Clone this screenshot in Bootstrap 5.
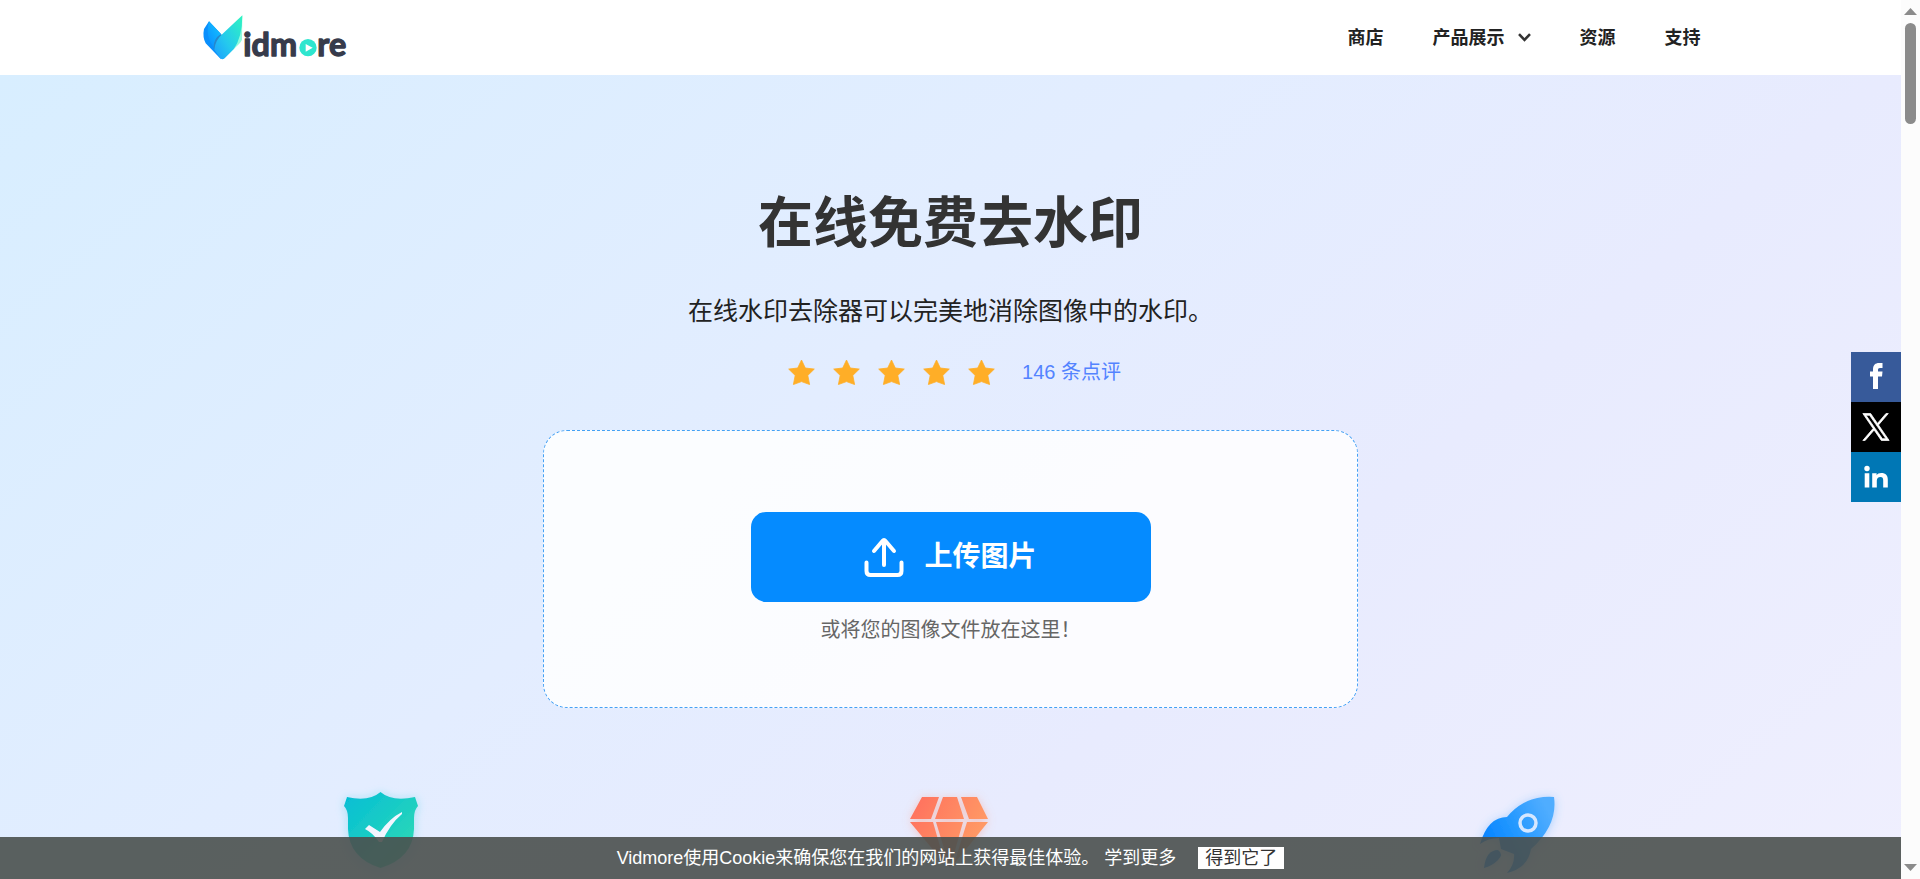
<!DOCTYPE html>
<html lang="zh-CN">
<head>
<meta charset="utf-8">
<meta name="viewport" content="width=device-width, initial-scale=1">
<title>在线免费去水印</title>
<link href="https://cdn.jsdelivr.net/npm/bootstrap@5.3.0/dist/css/bootstrap.min.css" rel="stylesheet">
<style>
body { font-family: "Liberation Sans", "Noto Sans CJK SC", sans-serif; color: #222; }
a { text-decoration: none; }
.wrap { width: 100%; max-width: 1500px; }
.site-header { height: 75px; }
.site-nav { gap: 49px; font-size: 18px; font-weight: 700; line-height: 26px; }
.site-nav a { color: #222; }
.with-menu { gap: 13px; }
.hero { padding-top: 108px; background: linear-gradient(140deg, #d8eeff 0%, #e3edff 42%, #e8ebfe 66%, #efeffe 100%); }
.hero h1 { font-size: 55px; line-height: 80px; font-weight: 700; color: #333; margin-bottom: 28px; }
.intro { font-size: 25px; line-height: 40px; margin-bottom: 26px; }
.rating { font-size: 20px; line-height: 30px; gap: 27px; margin-bottom: 43px; }
.stars { gap: 18px; }
.rating a { color: #5383ff; }
.drop-zone { width: 100%; max-width: 815px; height: 278px; padding-top: 81px; border: 1px dashed #44a1f5; border-radius: 24px; background: rgba(255, 255, 255, .85); }
.upload { width: 400px; max-width: 100%; height: 90px; border-radius: 15px; background: #058bff; color: #fff; font-size: 28px; font-weight: 700; gap: 20px; }
.upload:hover { background: #0a7de4; color: #fff; }
.hint { font-size: 20px; line-height: 30px; color: #666; margin-top: 13px; }
.features { width: 100%; max-width: 1240px; margin-top: 72px; }
.share { top: 352px; width: 50px; }
.share a { height: 50px; }
.fb { background: #375a9a; }
.tw { background: #000; }
.li { background: #0077b5; }
.cookie { height: 42px; gap: 22px; background: rgba(74, 80, 78, .9); color: #fff; font-size: 18px; line-height: 22px; }
.cookie a { color: #fff; }
.cookie button { background: #fff; color: #333; padding: 0 7px; height: 22px; line-height: 22px; }
.scroll-rail { width: 19px; padding: 8px 0; background: #fcfcfc; }
.thumb { width: 11px; height: 101px; margin-top: 8px; border-radius: 6px; background: #8b8b8b; }
</style>
</head>
<body>
<div class="d-flex vh-100 overflow-hidden">
  <div class="flex-grow-1 position-relative overflow-hidden d-flex flex-column">
    <header class="site-header bg-white flex-shrink-0 d-flex justify-content-center">
      <div class="wrap d-flex align-items-center justify-content-between">
        <a href="#" aria-label="Vidmore" class="d-flex">
          <svg width="152" height="54" viewBox="32 32 456 162">
            <defs>
              <linearGradient id="lw" x1="0" y1="1" x2="1" y2="0"><stop offset="0" stop-color="#0a8cff"/><stop offset="1" stop-color="#14c8ff"/></linearGradient>
              <linearGradient id="rw" x1="0" y1="1" x2="1" y2="0"><stop offset="0" stop-color="#1b9dff"/><stop offset=".4" stop-color="#25c8ee"/><stop offset="1" stop-color="#2ff5c0"/></linearGradient>
            </defs>
            <path d="M56 63L41 86Q36 110 46 129L92 177L80 120L92 101Z" fill="#0a8ffc"/>
            <path d="M56 63L92 101Q74 112 70 140Q52 118 52 92Q52 75 56 63Z" fill="url(#lw)"/>
            <path d="M92 101Q68 115 70 145L88 165L95 104Z" fill="#2688cc"/>
            <path d="M156 45L155 118Q152 125 146 131L130 147L140 100Z" fill="#92fbdc"/>
            <path d="M156 45L97 100Q74 120 72 148L90 174Q96 180 103 174L130 147Q156 110 156 45Z" fill="url(#rw)"/>
            <g font-family="Lato, sans-serif" font-weight="700" font-size="97" fill="#373b4b" stroke="#373b4b" stroke-width="4" stroke-linejoin="round">
              <text x="159" y="166">idm</text><text x="381" y="166">re</text>
            </g>
            <circle cx="353" cy="142" r="26" fill="#2ee6cf"/>
            <path d="M346 131L346 154L367 142Z" fill="#fff"/>
          </svg>
        </a>
        <nav class="site-nav d-flex align-items-center">
          <a href="#">商店</a>
          <a href="#" class="with-menu d-flex align-items-center">产品展示
            <svg width="13" height="9" viewBox="0 0 13 9" fill="none" stroke="#333" stroke-width="2.6"><path d="M1 1.2L6.500 6.800L12 1.2"/></svg></a>
          <a href="#">资源</a>
          <a href="#">支持</a>
        </nav>
      </div>
    </header>

    <main class="hero flex-grow-1 d-flex flex-column align-items-center text-center">
      <h1>在线免费去水印</h1>
      <p class="intro">在线水印去除器可以完美地消除图像中的水印。</p>
      <div class="rating d-flex align-items-center ps-2">
        <div class="stars d-flex" role="img" aria-label="5 / 5">
          <svg width="27" height="27" viewBox="0 0 27 27"><path id="star" d="M13.500 1L17.300 9L26.300 10.100L19.800 16.400L21.600 25.500L13.500 22.600L5.400 25.500L7.200 16.400L.7 10.100L9.700 9Z" fill="#ffae27" stroke="#ffae27" stroke-width=".8" stroke-linejoin="round"/></svg>
          <svg width="27" height="27" viewBox="0 0 27 27"><use href="#star"/></svg>
          <svg width="27" height="27" viewBox="0 0 27 27"><use href="#star"/></svg>
          <svg width="27" height="27" viewBox="0 0 27 27"><use href="#star"/></svg>
          <svg width="27" height="27" viewBox="0 0 27 27"><use href="#star"/></svg>
        </div>
        <a href="#">146 条点评</a>
      </div>

      <section class="drop-zone d-flex flex-column align-items-center flex-shrink-0">
        <button type="button" class="upload btn border-0 d-flex align-items-center justify-content-center">
          <svg width="40" height="40" viewBox="0 0 40 40" fill="none" stroke="#fff" stroke-width="4" stroke-linecap="round" stroke-linejoin="round"><path d="M20 28V3M10 14L18.500 4Q20 2 21.500 4L30 14M2.500 25.500V34Q2.500 38 6.500 38H33.500Q37.500 38 37.500 34V25.500"/></svg>
          上传图片
        </button>
        <p class="hint mb-0">或将您的图像文件放在这里！</p>
      </section>

      <section class="features d-flex justify-content-between flex-shrink-0">
        <svg width="100" height="100" viewBox="1 0 100 100">
          <defs>
            <linearGradient id="sh" x1="0" y1="0" x2="1" y2="1"><stop offset="0" stop-color="#02bdd6"/><stop offset="1" stop-color="#35deb0"/></linearGradient>
            <filter id="gs" x="-30%" y="-30%" width="160%" height="160%"><feDropShadow dx="0" dy="1" stdDeviation="5" flood-color="#2cc4dc" flood-opacity=".35"/></filter>
          </defs>
          <path filter="url(#gs)" d="M50.500 12Q62 22 85 17L88 26Q84 30 84 38V49Q83 78 50.500 88Q19 78 18 49V38Q18 30 14 26L17 17Q39 22 50.500 12Z" fill="url(#sh)"/>
          <path d="M35 49L39 45L50 52Q60 38 72 32L72 34Q60 44 52 62L49 62Q43 53 35 49Z" fill="#f2f5ff"/>
        </svg>
        <svg width="100" height="100" viewBox="1 0 100 100">
          <defs>
            <linearGradient id="dm" gradientUnits="userSpaceOnUse" x1="10" y1="20" x2="85" y2="60"><stop offset="0" stop-color="#ff6f5e"/><stop offset="1" stop-color="#ff9d66"/></linearGradient>
            <filter id="gd" x="-30%" y="-30%" width="160%" height="160%"><feDropShadow dx="0" dy="1" stdDeviation="5" flood-color="#ff9070" flood-opacity=".4"/></filter>
          </defs>
          <g fill="url(#dm)" filter="url(#gd)">
            <path d="M22 17H39L31 39H10ZM43 17H57L64 39H35ZM61 17H77L88 39H69ZM10 42H33L45 84ZM36 42H63L50 88ZM67 42H88L54 84Z"/>
          </g>
        </svg>
        <svg width="100" height="100" viewBox="3 0 100 100">
          <defs>
            <linearGradient id="rk" gradientUnits="userSpaceOnUse" x1="25" y1="70" x2="85" y2="40"><stop offset="0" stop-color="#0a86ff"/><stop offset=".4" stop-color="#2197ff"/><stop offset="1" stop-color="#50adff"/></linearGradient>
            <filter id="gr" x="-30%" y="-30%" width="160%" height="160%"><feDropShadow dx="0" dy="1" stdDeviation="5" flood-color="#3fa2ff" flood-opacity=".4"/></filter>
          </defs>
          <g fill="url(#rk)" filter="url(#gr)">
            <path d="M86 17Q57 15 39 37Q20 37 12 64Q20 58 31 58L33 69L46 74Q47 84 39 93Q60 88 63 69Q90 45 86 17Z"/>
            <path d="M16 88Q18 70 30 70Q36 74 30 80Q24 86 16 88Z"/>
          </g>
          <circle cx="60" cy="43" r="8" fill="none" stroke="#d5e7ff" stroke-width="3.500"/>
        </svg>
      </section>
    </main>

    <div class="share position-absolute end-0 d-flex flex-column">
      <a href="#" class="fb d-flex align-items-center justify-content-center" aria-label="Facebook"><svg width="50" height="50" viewBox="0 0 50 50"><path d="M22 37V24.500H19V19.500H22V17.500C22 13 24.500 11 28 11H31.500V16H29C27.500 16 27 16.700 27 18V19.500H31.500L31 24.500H27V37Z" fill="#fff"/></svg></a>
      <a href="#" class="tw d-flex align-items-center justify-content-center" aria-label="X"><svg width="28" height="28" viewBox="-.5 -.5 25 25"><path d="M14.230 10.160L22.980 0H20.900L13.300 8.820L7.240 0H.240L9.410 13.340L.240 24H2.310L10.330 14.680L16.730 24H23.730ZM11.390 13.460L10.460 12.130L3.060 1.560H6.240L12.210 10.090L13.140 11.420L20.910 22.510H17.720Z" fill="#fff" stroke="#fff" stroke-width=".7"/></svg></a>
      <a href="#" class="li d-flex align-items-center justify-content-center" aria-label="LinkedIn"><svg width="50" height="50" viewBox="0 0 50 50" fill="#fff"><circle cx="16" cy="16.500" r="2.700"/><path d="M13.700 21.300H18.300V35.500H13.700ZM21.200 21.300H25.600V23.200C26.500 21.700 28.100 20.900 30.200 20.900C34.800 20.900 36.800 23.300 36.800 27.500V35.500H32.200V28.300C32.200 26.200 31.500 25 29.500 25C27 25 25.800 26.600 25.800 28.700V35.500H21.200Z"/></svg></a>
    </div>

    <div class="cookie position-absolute bottom-0 start-0 end-0 d-flex align-items-center justify-content-center">
      <span>Vidmore使用Cookie来确保您在我们的网站上获得最佳体验。 <a href="#">学到更多</a></span>
      <button type="button" class="border-0">得到它了</button>
    </div>
  </div>

  <div class="scroll-rail flex-shrink-0 d-flex flex-column align-items-center" aria-hidden="true">
    <svg width="13" height="7"><path d="M0 7L6.500 0L13 7Z" fill="#8b8b8b"/></svg>
    <div class="thumb"></div>
    <svg class="mt-auto" width="13" height="7"><path d="M0 0L6.500 7L13 0Z" fill="#8b8b8b"/></svg>
  </div>
</div>
<script src="https://cdn.jsdelivr.net/npm/bootstrap@5.3.0/dist/js/bootstrap.bundle.min.js"></script>
</body>
</html>
